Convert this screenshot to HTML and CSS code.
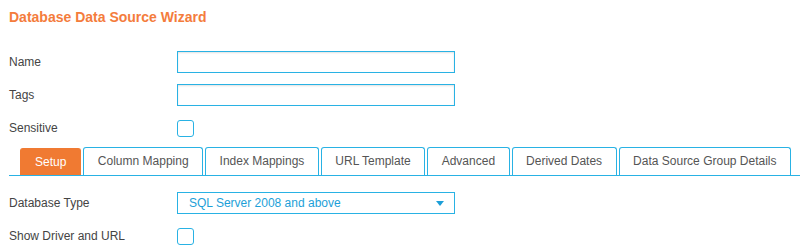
FILE: index.html
```html
<!DOCTYPE html>
<html>
<head>
<meta charset="utf-8">
<title>Database Data Source Wizard</title>
<link rel="stylesheet" href="styles.css">
</head>
<body>

<h1 class="title">Database Data Source Wizard</h1>

<form class="form">
	<div class="row">
		<label class="label" for="name">Name</label>
		<input class="field" id="name" type="text">
	</div>
	<div class="row">
		<label class="label" for="tags">Tags</label>
		<input class="field" id="tags" type="text">
	</div>
	<div class="row">
		<label class="label" for="sensitive">Sensitive</label>
		<span class="check" id="sensitive"></span>
	</div>
</form>

<ul class="tabs">
	<li class="tab active">Setup</li>
	<li class="tab">Column Mapping</li>
	<li class="tab">Index Mappings</li>
	<li class="tab">URL Template</li>
	<li class="tab">Advanced</li>
	<li class="tab">Derived Dates</li>
	<li class="tab">Data Source Group Details</li>
</ul>

<div class="form setup">
	<div class="row">
		<span class="label">Database Type</span>
		<div class="field select">
			<span>SQL Server 2008 and above</span>
			<span class="caret"></span>
		</div>
	</div>
	<div class="row">
		<span class="label">Show Driver and URL</span>
		<span class="check"></span>
	</div>
</div>

</body>
</html>
```

FILE: styles.css
```css
body {
	margin: 0;
	padding: 0 0 0 9px;
	font-family: "Liberation Sans", Arial, sans-serif;
	font-size: 12px;
	color: #444;
	background: #fff;
}

.title {
	margin: 9px 0 0;
	height: 16px;
	line-height: 16px;
	font-size: 14px;
	font-weight: bold;
	color: #f47c3c;
}

.form {
	display: grid;
	row-gap: 11px;
	margin-top: 26px;
}

.row {
	display: grid;
	grid-template-columns: 168px 278px;
	align-items: center;
	height: 22px;
}

.label {
	color: #444;
}

.field {
	box-sizing: border-box;
	height: 22px;
	width: 278px;
	margin: 0;
	border: 1px solid #29b2e4;
	box-shadow: inset 0 1px 2px rgba(0, 0, 0, 0.12);
	font: inherit;
	outline: none;
}

.check {
	box-sizing: border-box;
	width: 17px;
	height: 17px;
	border: 1px solid #29b2e4;
	border-radius: 3px;
}

.tabs {
	display: flex;
	gap: 2px;
	list-style: none;
	margin: 8px 0 0;
	padding: 0 0 0 11px;
	border-bottom: 1px solid #29b2e4;
}

.tab {
	box-sizing: border-box;
	height: 28px;
	line-height: 26px;
	padding: 0 13.5px;
	border: 1px solid #29b2e4;
	border-bottom: none;
	border-radius: 3px 3px 0 0;
	color: #555;
	background: #fff;
}

.tab.active {
	margin-top: 1px;
	height: 27px;
	line-height: 26px;
	border-color: #f07a32;
	background: #f07a32;
	color: #fff;
	padding: 0 14px;
}

.setup {
	margin-top: 16px;
}

.select {
	display: flex;
	align-items: center;
	justify-content: space-between;
	padding: 0 10px 0 11px;
	color: #1d9fd8;
	box-shadow: none;
}

.caret {
	width: 0;
	height: 0;
	border-left: 4px solid transparent;
	border-right: 4px solid transparent;
	border-top: 5px solid #1d9fd8;
}
```
